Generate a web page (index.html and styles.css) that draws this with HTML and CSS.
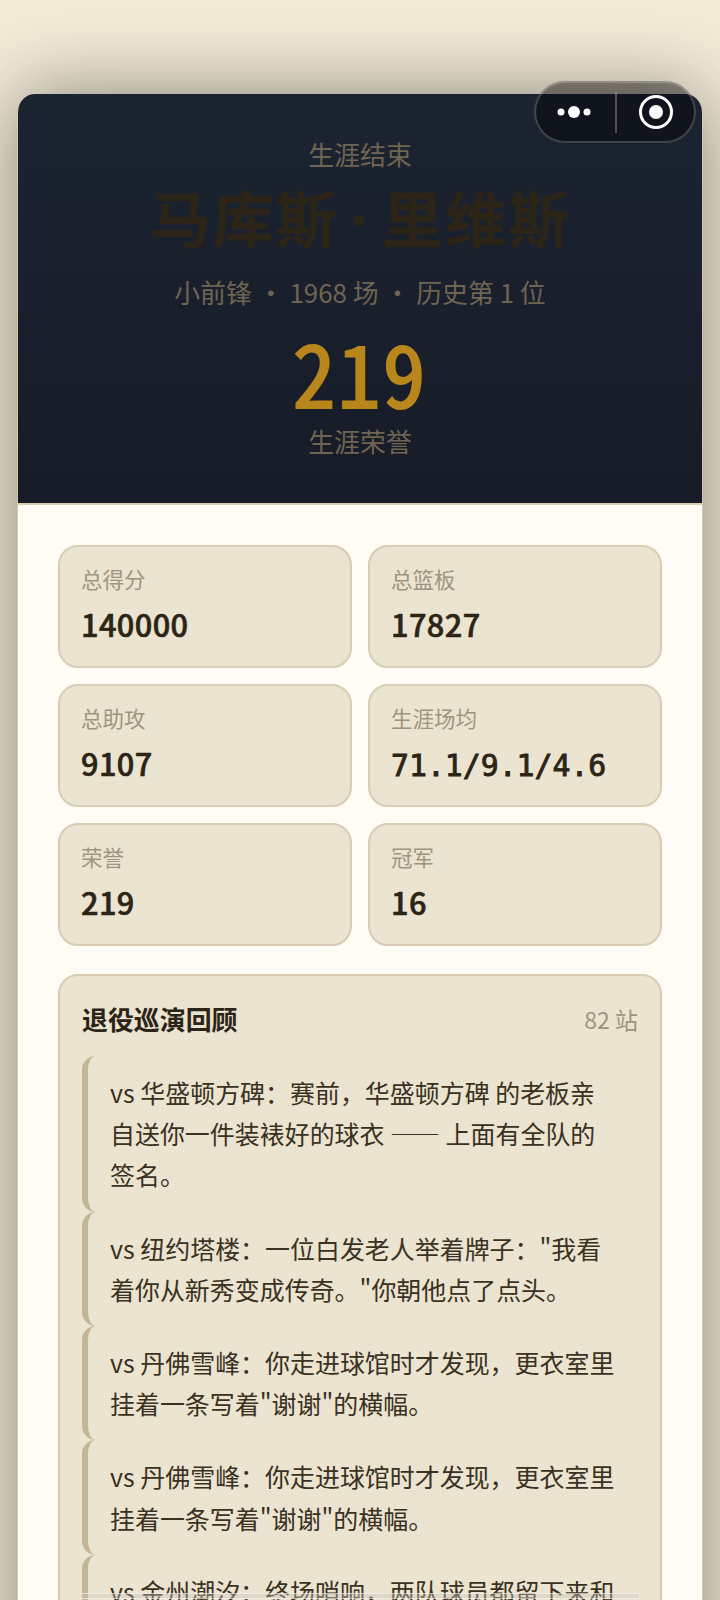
FILE: index.html
```html
<!DOCTYPE html>
<html lang="zh-CN">
<head>
<meta charset="utf-8">
<title>生涯结束</title>
<link rel="stylesheet" href="styles.css">
</head>
<body>
<main class="page">
  <article class="card">
    <header class="hero">
      <p class="hero-kicker">生涯结束</p>
      <h1 class="hero-name">马库斯<span class="name-dot"> · </span>里维斯</h1>
      <p class="hero-meta">小前锋 ・ 1968 场 ・ 历史第 1 位</p>
      <p class="hero-score">219</p>
      <p class="hero-caption">生涯荣誉</p>
    </header>
    <div class="content">
      <section class="stats">
        <div class="stat"><div class="stat-label">总得分</div><div class="stat-value">140000</div></div>
        <div class="stat"><div class="stat-label">总篮板</div><div class="stat-value">17827</div></div>
        <div class="stat"><div class="stat-label">总助攻</div><div class="stat-value">9107</div></div>
        <div class="stat"><div class="stat-label">生涯场均</div><div class="stat-value mono">71.1/9.1/4.6</div></div>
        <div class="stat"><div class="stat-label">荣誉</div><div class="stat-value">219</div></div>
        <div class="stat"><div class="stat-label">冠军</div><div class="stat-value">16</div></div>
      </section>
      <section class="tour">
        <div class="tour-head">
          <h2 class="tour-title">退役巡演回顾</h2>
          <span class="tour-count">82 站</span>
        </div>
        <p class="memo">vs 华盛顿方碑&#xFF1A;赛前&#xFF0C;华盛顿方碑 的老板亲自送你一件装裱好的球衣 —— 上面有全队的签名。</p>
        <p class="memo">vs 纽约塔楼&#xFF1A;一位白发老人举着牌子&#xFF1A;"我看着你从新秀变成传奇。"你朝他点了点头。</p>
        <p class="memo">vs 丹佛雪峰&#xFF1A;你走进球馆时才发现&#xFF0C;更衣室里挂着一条写着"谢谢"的横幅。</p>
        <p class="memo">vs 丹佛雪峰&#xFF1A;你走进球馆时才发现&#xFF0C;更衣室里挂着一条写着"谢谢"的横幅。</p>
        <p class="memo">vs 金州潮汐&#xFF1A;终场哨响&#xFF0C;两队球员都留下来和</p>
      </section>
    </div>
  </article>
</main>
<div class="capsule">
  <svg class="capsule-dots" width="40" height="14" viewBox="0 0 40 14"><circle cx="7" cy="7" r="3.5"/><circle cx="20" cy="7" r="6"/><circle cx="33" cy="7" r="3.5"/></svg>
  <span class="capsule-divider"></span>
  <svg class="capsule-ring" width="36" height="36" viewBox="0 0 36 36"><circle class="ring" cx="18" cy="18" r="15.5"/><circle cx="18" cy="18" r="7"/></svg>
</div>
<div class="home-bar"></div>
</body>
</html>
```
FILE: styles.css
```css
* { box-sizing: border-box; }
html, body { margin: 0; height: 1600px; overflow: hidden; }
body {
  position: relative;
  background: #f3ebd8;
  font-family: "Noto Sans CJK SC", "Noto Sans", sans-serif;
  color: #2c2416;
}
.page { padding: 94px 17px 0; }
.card {
  border: 1px solid #d2c7af;
  border-width: 0 1px;
  border-radius: 18px 18px 0 0;
  background: #fffcf5;
  box-shadow: 0 0 80px rgba(0, 0, 0, 0.45);
  overflow: hidden;
  height: 1600px;
}
.hero {
  height: 411px;
  padding-top: 40px;
  background: linear-gradient(180deg, #1c2431 0%, #161b27 100%);
  border-bottom: 2px solid #d8ccb4;
  text-align: center;
}
.hero p, .hero h1 { margin: 0; }
.hero-kicker { font-size: 25.92px; line-height: 40px; color: #6f6552; }
.hero-name {
  margin-top: 1px !important;
  font-size: 61.44px;
  line-height: 84px;
  font-weight: 700;
  letter-spacing: 1.5px;
  color: #2c2416;
}
.name-dot { font-family: "Noto Sans", sans-serif; word-spacing: -5px; }
.hero-meta { margin-top: 11px !important; font-size: 25.92px; line-height: 40px; color: #6f6552; }
.hero-score {
  margin-top: 9px !important;
  font-family: "Noto Sans Mono CJK SC", "DejaVu Sans Mono", monospace;
  font-size: 86px;
  line-height: 100px;
  font-weight: 400;
  letter-spacing: 2px;
  -webkit-text-stroke: 2px #b8861b;
  color: #b8861b;
}
.hero-caption { font-size: 25.92px; line-height: 40px; color: #6f6552; margin-top: 0 !important; }
.content { padding: 40px 40px 0; }
.stats { display: grid; grid-template-columns: 1fr 1fr; gap: 16px; }
.stat {
  height: 123px;
  padding: 16px 21px;
  border: 2px solid #d8ccb4;
  border-radius: 20px;
  background: #ebe4d0;
}
.stat-label { font-size: 21.5px; line-height: 32px; color: #a09480; }
.stat-value { margin-top: 7px; font-size: 30.72px; line-height: 44px; font-weight: 500; letter-spacing: 0.4px; -webkit-text-stroke: 0.6px #2c2416; color: #2c2416; }
.mono { font-family: "DejaVu Sans Mono", monospace; font-size: 29.8px; font-weight: 400; line-height: 50px; letter-spacing: 0; -webkit-text-stroke: 0.9px #2c2416; }
.tour {
  margin-top: 28px;
  padding: 24px 22px 0;
  border: 2px solid #d8ccb4;
  border-radius: 20px;
  background: #ebe4d0;
  height: 800px;
}
.tour-head { display: flex; justify-content: space-between; align-items: center; height: 38px; margin-bottom: 18px; }
.tour-title { margin: 0; font-size: 25.92px; line-height: 38px; font-weight: 700; }
.tour-count { font-size: 23.04px; color: #a09480; }
.memo {
  margin: 0;
  padding: 16px 20px 16px 22px;
  border-left: 6px solid #c4b594;
  border-radius: 14px;
  font-size: 24.96px;
  line-height: 41.18px;
  color: #3a3122;
}
.capsule {
  position: absolute;
  left: 534px;
  top: 81px;
  width: 162px;
  height: 62px;
  border: 2px solid rgba(255, 255, 255, 0.2);
  border-radius: 31px;
  background: rgba(0, 0, 0, 0.42);
}
.capsule-dots { position: absolute; left: 18px; top: 22px; fill: #fff; }
.capsule-divider { position: absolute; left: 79px; top: 10px; width: 2px; height: 40px; background: rgba(255, 255, 255, 0.25); }
.capsule-ring { position: absolute; left: 102px; top: 11px; fill: #fff; }
.ring { fill: none; stroke: #fff; stroke-width: 3; }
.home-bar {
  position: absolute;
  left: 80px;
  top: 1593px;
  width: 560px;
  height: 6px;
  border: 1px solid rgba(255, 255, 255, 0.5);
  border-radius: 3px;
  background: rgba(200, 195, 180, 0.4);
}
```
